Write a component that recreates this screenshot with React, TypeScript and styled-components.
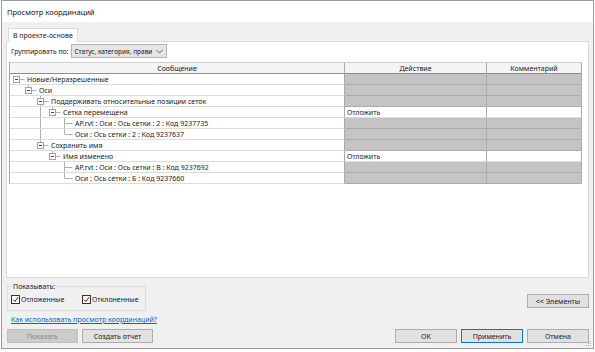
import React from "react";
import styled, {createGlobalStyle} from "styled-components";

const GlobalStyle = createGlobalStyle`
  body{
    margin: 0;
    background: #ffffff;
    font-family: "Noto Sans", "Open Sans", sans-serif;
    font-size: 7px;
    color: #1a1a1a;
  }
`;

const Window = styled.div`
  position: relative;
  margin-left: 1px;
  width: 591px;
  height: 347px;
  border: 1px solid #9d9d9d;
  background: #f0f0f0;
  display: flex;
  flex-direction: column;
`;

const TitleBar = styled.div`
  height: 21px;
  background: #ffffff;
  display: flex;
  align-items: center;
  padding-left: 5px;
  font-size: 7.5px;
  color: #111;
`;

const Body = styled.div`
  flex: 1;
  display: flex;
  flex-direction: column;
  padding: 6px 4px 0 4px;
`;

const TabStrip = styled.div`
  display: flex;
  padding-left: 2px;
`;

const Tab = styled.div`
  height: 13px;
  padding: 0 4px;
  display: flex;
  align-items: center;
  background: #ffffff;
  border: 1px solid #d9d9d9;
  border-bottom: none;
  margin-bottom: -1px;
  position: relative;
  z-index: 1;
`;

const TabPage = styled.div`
  height: 233px;
  background: #ffffff;
  border: 1px solid #d9d9d9;
  padding: 2px 2px 0 2px;
  display: flex;
  flex-direction: column;
  gap: 4px;
`;

const GroupRow = styled.div`
  display: flex;
  align-items: center;
  gap: 3px;
  padding-left: 2px;
  font-size: 6.8px;
`;

const Combo = styled.div`
  box-sizing: border-box;
  width: 96px;
  height: 14px;
  border: 1px solid #b4b4b4;
  background: #e5e5e5;
  display: flex;
  align-items: center;
  gap: 4px;
  padding: 0 3px 0 2px;
  white-space: nowrap;
  font-size: 6.5px;
`;

const ComboText = styled.span`
  flex: 1;
  overflow: hidden;
`;

const Table = styled.div`
  width: 572px;
  display: grid;
  grid-template-columns: 335px 142px 95px;
  border-left: 1px solid #a8a8a8;
`;

const HeadCell = styled.div`
  height: 10px;
  display: flex;
  align-items: center;
  justify-content: center;
  background: #f4f4f4;
  border-top: 1px solid #d0d0d0;
  border-right: 1px solid #a8a8a8;
  border-bottom: 1px solid #8f8f8f;
`;

const MsgCell = styled.div`
  height: 10px;
  display: flex;
  align-items: center;
  background: #ffffff;
  border-bottom: 1px solid #dcdcdc;
  border-right: 1px solid #a8a8a8;
  padding-left: 1px;
  white-space: nowrap;
`;

const ActionCell = styled.div<{$open: boolean}>`
  height: 10px;
  display: flex;
  align-items: center;
  padding-left: 2px;
  background: ${p => p.$open ? "#ffffff" : "#c4c4c4"};
  border-bottom: 1px solid ${p => p.$open ? "#dcdcdc" : "#acacac"};
  border-right: 1px solid #acacac;
`;

const Gutter = styled.svg`
  flex: none;
  display: block;
`;

const Footer = styled.div`
  display: flex;
  flex-direction: column;
  padding: 0 0 0 1px;
`;

const TopRow = styled.div`
  display: flex;
  justify-content: space-between;
  align-items: flex-start;
  margin-top: 4px;
`;

const GroupBox = styled.fieldset`
  box-sizing: border-box;
  margin: 0;
  width: 139px;
  height: 29px;
  padding: 0 3px 2px 3px;
  border: 1px solid #dcdcdc;
  display: flex;
  align-items: center;
  legend{
    padding: 0 1px;
    margin-left: 1px;
    font-size: 7px;
  }
`;

const Check = styled.label<{$w: number}>`
  width: ${p => p.$w}px;
  display: flex;
  align-items: center;
  gap: 1px;
`;

const Box = styled.span`
  width: 7px;
  height: 7px;
  border: 1px solid #333;
  background: #fff;
  display: flex;
  align-items: center;
  justify-content: center;
`;

const Link = styled.a`
  margin-top: 4px;
  margin-left: 4px;
  color: #0066cc;
  text-decoration: underline;
  height: 9px;
  line-height: 9px;
`;

const ButtonRow = styled.div`
  display: flex;
  justify-content: space-between;
  margin-top: 5px;
`;

const ButtonGroup = styled.div`
  display: flex;
  gap: 4px;
`;

const Button = styled.button<{$primary?: boolean; $w?: number}>`
  width: ${p => p.$w || 62}px;
  height: 14px;
  padding: 0;
  font-family: "Noto Sans", "Open Sans", sans-serif;
  font-size: 7px;
  color: #1a1a1a;
  background: #e1e1e1;
  border: 1px solid ${p => p.$primary ? "#0078d7" : "#adadad"};
  &:disabled{
    background: #cccccc;
    border-color: #bfbfbf;
    color: #8a8a8a;
  }
`;

const ElementsButton = styled(Button)`
  margin-top: 12px;
`;

const Grip = styled.svg`
  position: absolute;
  right: 1px;
  bottom: 1px;
`;

type Row = {
  level: number;
  text: string;
  box?: boolean;
  last: boolean;
  cont: boolean[];
  action?: string;
};

const rows: Row[] = [
  {level: 0, text: "Новые/Неразрешенные", box: true, last: true, cont: []},
  {level: 1, text: "Оси", box: true, last: true, cont: []},
  {level: 2, text: "Поддерживать относительные позиции сеток", box: true, last: false, cont: [false]},
  {level: 3, text: "Сетка перемещена", box: true, last: true, cont: [false, true], action: "Отложить"},
  {level: 4, text: "AP.rvt : Оси : Ось сетки : 2 : Код 9237735", last: false, cont: [false, true, false]},
  {level: 4, text: "Оси : Ось сетки : 2 : Код 9237637", last: true, cont: [false, true, false]},
  {level: 2, text: "Сохранить имя", box: true, last: true, cont: [false]},
  {level: 3, text: "Имя изменено", box: true, last: true, cont: [false, false], action: "Отложить"},
  {level: 4, text: "AP.rvt : Оси : Ось сетки : В : Код 9237692", last: false, cont: [false, false, false]},
  {level: 4, text: "Оси : Ось сетки : Б : Код 9237660", last: true, cont: [false, false, false]},
];

const cx = (l: number) => 5.5 + 12 * l;

const TreeLines = ({row}: {row: Row}) => {
  const x = cx(row.level);
  const line = "#b0b0b0";
  return (
    <Gutter width={16 + 12 * row.level} height={10}>
      {row.cont.map((c, i) => c ? <line key={i} x1={cx(i + 1)} y1={0} x2={cx(i + 1)} y2={10} stroke={line}/> : null)}
      {row.level > 0 && <line x1={x} y1={0} x2={x} y2={row.last ? 5 : 10} stroke={line}/>}
      <line x1={x} y1={5.5} x2={x + 8} y2={5.5} stroke={line}/>
      {row.box && (
        <g>
          <rect x={x - 3} y={2.5} width={6} height={6} fill="#fff" stroke="#a0a0a0"/>
          <line x1={x - 1.5} y1={5.5} x2={x + 1.5} y2={5.5} stroke="#444"/>
        </g>
      )}
    </Gutter>
  );
};

const Tick = () => (
  <svg width={7} height={7} viewBox="0 0 7 7">
    <path d="M1 3.6 L2.8 5.4 L6.2 1.2" fill="none" stroke="#222" strokeWidth={1}/>
  </svg>
);

const App = () => {
  return (
    <>
      <GlobalStyle/>
      <Window>
        <TitleBar>Просмотр координаций</TitleBar>
        <Body>
          <TabStrip>
            <Tab>В проекте-основе</Tab>
          </TabStrip>
          <TabPage>
            <GroupRow>
              <span>Группировать по:</span>
              <Combo>
                <ComboText>Статус, категория, прави</ComboText>
                <svg width={7} height={5} viewBox="0 0 7 5">
                  <path d="M0.5 1 L3.5 4 L6.5 1" fill="none" stroke="#444" strokeWidth={0.8}/>
                </svg>
              </Combo>
            </GroupRow>
            <Table>
              <HeadCell>Сообщение</HeadCell>
              <HeadCell>Действие</HeadCell>
              <HeadCell>Комментарий</HeadCell>
              {rows.map((r, i) => (
                <React.Fragment key={i}>
                  <MsgCell>
                    <TreeLines row={r}/>
                    <span>{r.text}</span>
                  </MsgCell>
                  <ActionCell $open={!!r.action}>{r.action}</ActionCell>
                  <ActionCell $open={!!r.action}/>
                </React.Fragment>
              ))}
            </Table>
          </TabPage>
          <Footer>
            <TopRow>
              <GroupBox>
                <legend>Показывать:</legend>
                <Check $w={71}><Box><Tick/></Box>Отложенные</Check>
                <Check $w={60}><Box><Tick/></Box>Отклоненные</Check>
              </GroupBox>
              <ElementsButton $w={62}>&lt;&lt; Элементы</ElementsButton>
            </TopRow>
            <Link>Как использовать просмотр координаций?</Link>
            <ButtonRow>
              <ButtonGroup>
                <Button $w={71} disabled>Показать</Button>
                <Button $w={71}>Создать отчет</Button>
              </ButtonGroup>
              <ButtonGroup>
                <Button $w={62}>OK</Button>
                <Button $w={62} $primary>Применить</Button>
                <Button $w={62}>Отмена</Button>
              </ButtonGroup>
            </ButtonRow>
          </Footer>
        </Body>
        <Grip width={6} height={6} viewBox="0 0 6 6">
          <rect x={4} y={0} width={1} height={1} fill="#aaa"/>
          <rect x={2} y={2} width={1} height={1} fill="#aaa"/>
          <rect x={4} y={2} width={1} height={1} fill="#aaa"/>
          <rect x={0} y={4} width={1} height={1} fill="#aaa"/>
          <rect x={2} y={4} width={1} height={1} fill="#aaa"/>
          <rect x={4} y={4} width={1} height={1} fill="#aaa"/>
        </Grip>
      </Window>
    </>
  );
};

export default App;
